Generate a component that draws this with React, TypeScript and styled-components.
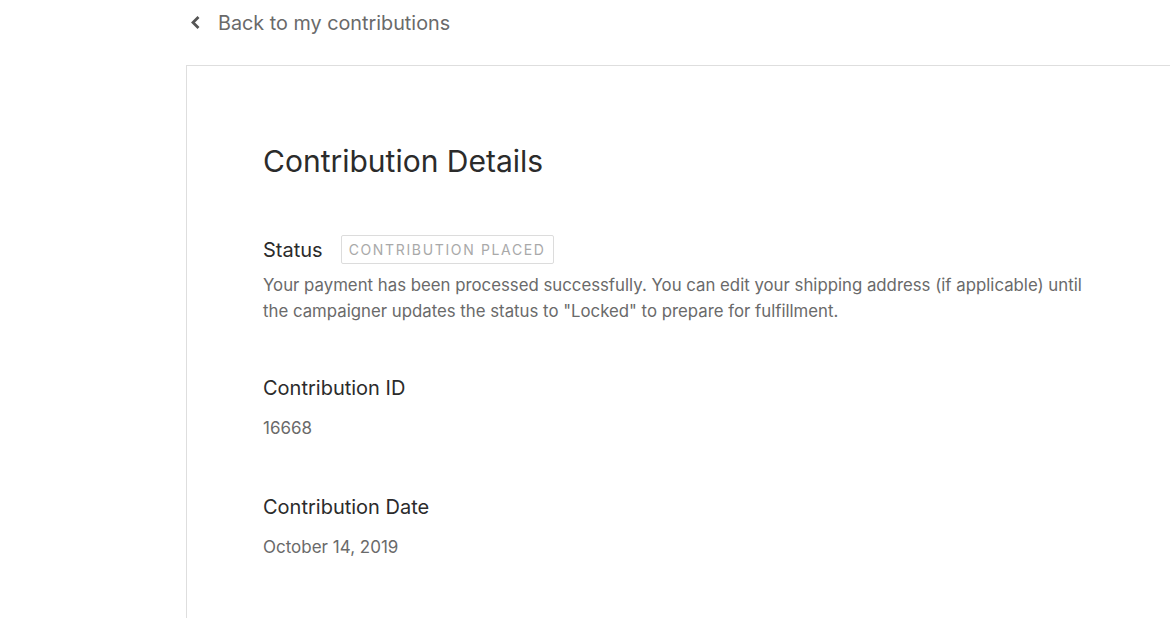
import React from "react";
import styled, { createGlobalStyle } from "styled-components";

const Global = createGlobalStyle`
  html, body { margin: 0; padding: 0; background: #fff; }
  body { font-family: Inter, "Liberation Sans", sans-serif; -webkit-font-smoothing: antialiased; }
`;

const Page = styled.div`
  padding-left: 186px;
  width: 1170px;
  box-sizing: border-box;
  overflow: hidden;
`;

const BackLink = styled.a`
  display: flex;
  align-items: center;
  gap: 16px;
  height: 45px;
  padding-left: 3px;
  color: #6a6a6a;
  font-size: 19.8px;
  text-decoration: none;
  cursor: pointer;
`;

const Panel = styled.section`
  margin-top: 20px;
  border-top: 1px solid #dedede;
  border-left: 1px solid #dedede;
  padding: 75px 0 60px 76px;
  min-height: 600px;
`;

const Title = styled.h1`
  margin: 0 0 54px;
  font-size: 30px;
  font-weight: 400;
  line-height: 40px;
  color: #2b2b2b;
`;

const Section = styled.div<{ $gap?: number }>`
  margin-bottom: ${(p) => p.$gap ?? 52}px;
`;

const LabelRow = styled.div`
  display: flex;
  align-items: center;
  gap: 18px;
`;

const Label = styled.h2`
  margin: 0;
  font-size: 20px;
  font-weight: 400;
  line-height: 28px;
  color: #2b2b2b;
`;

const Badge = styled.span`
  border: 1px solid #dcdcdc;
  border-radius: 2px;
  padding: 0 7px;
  height: 27px;
  display: inline-flex;
  align-items: center;
  font-size: 14px;
  letter-spacing: 1.65px;
  color: #a9a9a9;
  text-transform: uppercase;
`;

const Body = styled.p`
  margin: 8px 0 0;
  max-width: 840px;
  font-size: 16.8px;
  line-height: 26px;
  color: #6a6a6a;
`;

const Value = styled.p`
  margin: 13px 0 0;
  font-size: 17px;
  line-height: 26px;
  color: #6a6a6a;
`;

const Chevron = () => (
  <svg width="13" height="15" viewBox="0 0 13 15" aria-hidden>
    <path d="M9.5 2 L4 7.5 L9.5 13" fill="none" stroke="#555" strokeWidth="2.8" />
  </svg>
);

export default function App() {
  return (
    <>
      <Global />
      <Page>
        <BackLink>
          <Chevron />
          Back to my contributions
        </BackLink>
        <Panel>
          <Title>Contribution Details</Title>
          <Section $gap={50}>
            <LabelRow>
              <Label>Status</Label>
              <Badge>Contribution Placed</Badge>
            </LabelRow>
            <Body>
              Your payment has been processed successfully. You can edit your shipping address (if
              applicable) until the campaigner updates the status to "Locked" to prepare for
              fulfillment.
            </Body>
          </Section>
          <Section>
            <Label>Contribution ID</Label>
            <Value>16668</Value>
          </Section>
          <Section>
            <Label>Contribution Date</Label>
            <Value>October 14, 2019</Value>
          </Section>
        </Panel>
      </Page>
    </>
  );
}
